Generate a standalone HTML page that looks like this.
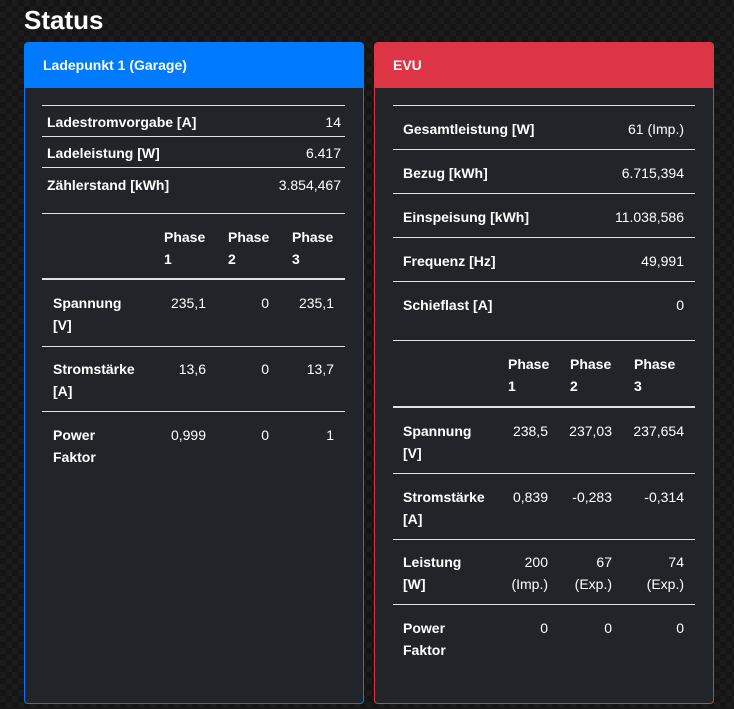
<!DOCTYPE html>
<html><head><meta charset="utf-8"><style>
*{margin:0;padding:0;box-sizing:border-box}
body{width:734px;height:709px;overflow:hidden;position:relative;font-family:"Liberation Sans",sans-serif;color:#fff;
background-color:#1b1b1b;
background-image:linear-gradient(45deg,#141414 25%,transparent 25%,transparent 75%,#141414 75%),linear-gradient(45deg,#141414 25%,transparent 25%,transparent 75%,#141414 75%);
background-size:12px 12px;background-position:0 0,6px 6px}
h1{position:absolute;left:24px;top:3px;font-size:26px;font-weight:bold;line-height:34px}
.card{position:absolute;top:42px;width:340px;height:662px;background:#212529;border:1px solid;border-radius:4px;overflow:hidden}
.hd{height:45px;color:#fff;font-weight:bold;font-size:14px;padding:14px 0 0 18px}
.t{position:absolute;font-size:14px;line-height:22px;white-space:nowrap;margin-top:1px}
.b{font-weight:bold}
.r{text-align:right}
.l{position:absolute;height:1px;background:#dee2e6}
.l2{position:absolute;height:2px;background:#dee2e6}
</style></head><body>
<h1>Status</h1>
<div class="card" style="left:24px;border-color:#007bff"><div class="hd" style="background:#007bff">Ladepunkt 1 (Garage)</div></div>
<div class="card" style="left:374px;border-color:#dc3545"><div class="hd" style="background:#dc3545">EVU</div></div>

<!-- left -->
<div class="l" style="left:42px;width:303px;top:105px"></div>
<div class="t b" style="left:47px;top:110px">Ladestromvorgabe [A]</div><div class="t r" style="right:393px;top:110px">14</div>
<div class="l" style="left:42px;width:303px;top:136px"></div>
<div class="t b" style="left:47px;top:141px">Ladeleistung [W]</div><div class="t r" style="right:393px;top:141px">6.417</div>
<div class="l" style="left:42px;width:303px;top:167px"></div>
<div class="t b" style="left:47px;top:173px">Zählerstand [kWh]</div><div class="t r" style="right:393px;top:173px">3.854,467</div>
<div class="l" style="left:42px;width:303px;top:213px"></div>
<div class="t b" style="left:164px;top:225px">Phase<br>1</div>
<div class="t b" style="left:228px;top:225px">Phase<br>2</div>
<div class="t b" style="left:292px;top:225px">Phase<br>3</div>
<div class="l2" style="left:42px;width:303px;top:278px"></div>
<div class="t b" style="left:53px;top:291px">Spannung<br>[V]</div>
<div class="t r" style="right:528px;top:291px">235,1</div><div class="t r" style="right:465px;top:291px">0</div><div class="t r" style="right:400px;top:291px">235,1</div>
<div class="l" style="left:42px;width:303px;top:346px"></div>
<div class="t b" style="left:53px;top:357px">Stromstärke<br>[A]</div>
<div class="t r" style="right:528px;top:357px">13,6</div><div class="t r" style="right:465px;top:357px">0</div><div class="t r" style="right:400px;top:357px">13,7</div>
<div class="l" style="left:42px;width:303px;top:411px"></div>
<div class="t b" style="left:53px;top:423px">Power<br>Faktor</div>
<div class="t r" style="right:528px;top:423px">0,999</div><div class="t r" style="right:465px;top:423px">0</div><div class="t r" style="right:400px;top:423px">1</div>

<!-- right -->
<div class="l" style="left:393px;width:302px;top:105px"></div>
<div class="t b" style="left:403px;top:117px">Gesamtleistung [W]</div><div class="t r" style="right:50px;top:117px">61 (Imp.)</div>
<div class="l" style="left:393px;width:302px;top:149px"></div>
<div class="t b" style="left:403px;top:161px">Bezug [kWh]</div><div class="t r" style="right:50px;top:161px">6.715,394</div>
<div class="l" style="left:393px;width:302px;top:193px"></div>
<div class="t b" style="left:403px;top:205px">Einspeisung [kWh]</div><div class="t r" style="right:50px;top:205px">11.038,586</div>
<div class="l" style="left:393px;width:302px;top:237px"></div>
<div class="t b" style="left:403px;top:249px">Frequenz [Hz]</div><div class="t r" style="right:50px;top:249px">49,991</div>
<div class="l" style="left:393px;width:302px;top:281px"></div>
<div class="t b" style="left:403px;top:293px">Schieflast [A]</div><div class="t r" style="right:50px;top:293px">0</div>
<div class="l" style="left:393px;width:302px;top:340px"></div>
<div class="t b" style="left:508px;top:352px">Phase<br>1</div>
<div class="t b" style="left:570px;top:352px">Phase<br>2</div>
<div class="t b" style="left:634px;top:352px">Phase<br>3</div>
<div class="l2" style="left:393px;width:302px;top:406px"></div>
<div class="t b" style="left:403px;top:419px">Spannung<br>[V]</div>
<div class="t r" style="right:186px;top:419px">238,5</div><div class="t r" style="right:122px;top:419px">237,03</div><div class="t r" style="right:50px;top:419px">237,654</div>
<div class="l" style="left:393px;width:302px;top:473px"></div>
<div class="t b" style="left:403px;top:485px">Stromstärke<br>[A]</div>
<div class="t r" style="right:186px;top:485px">0,839</div><div class="t r" style="right:122px;top:485px">-0,283</div><div class="t r" style="right:50px;top:485px">-0,314</div>
<div class="l" style="left:393px;width:302px;top:539px"></div>
<div class="t b" style="left:403px;top:550px">Leistung<br>[W]</div>
<div class="t r" style="right:186px;top:550px">200<br>(Imp.)</div><div class="t r" style="right:122px;top:550px">67<br>(Exp.)</div><div class="t r" style="right:50px;top:550px">74<br>(Exp.)</div>
<div class="l" style="left:393px;width:302px;top:604px"></div>
<div class="t b" style="left:403px;top:616px">Power<br>Faktor</div>
<div class="t r" style="right:186px;top:616px">0</div><div class="t r" style="right:122px;top:616px">0</div><div class="t r" style="right:50px;top:616px">0</div>
</body></html>
